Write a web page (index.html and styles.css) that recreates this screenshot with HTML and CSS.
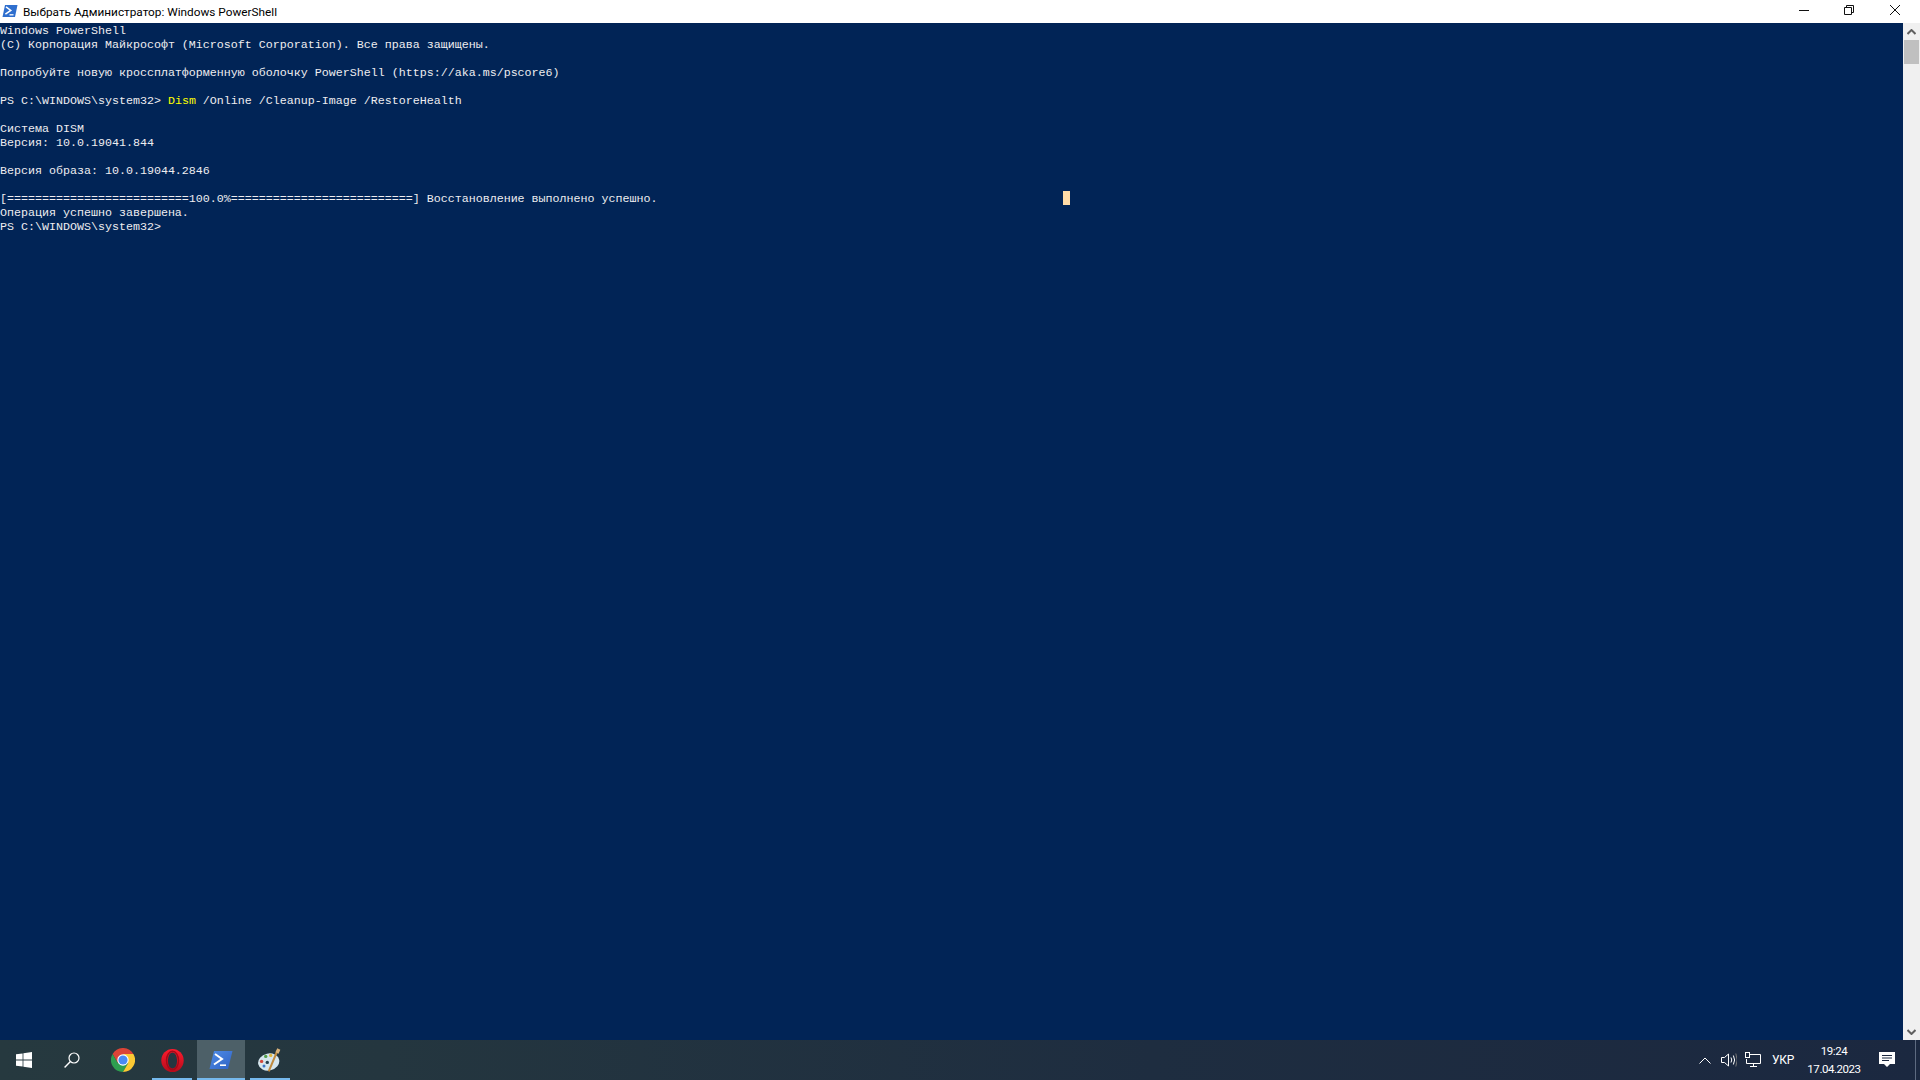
FILE: index.html
```html
<!DOCTYPE html>
<html lang="ru">
<head>
<meta charset="utf-8">
<title>Windows PowerShell</title>
<link rel="stylesheet" href="styles.css">
</head>
<body>
<div class="window">
  <header class="titlebar">
    <svg class="title-icon" viewBox="0 0 16 12" width="16" height="12"><path d="M3 0H15.5L13 12H0.5Z" fill="#2f6fce"/><path d="M4 1.8L8.8 5.4L3.4 9.2" fill="none" stroke="#fff" stroke-width="1.5"/><path d="M7.5 9.8H11.5" stroke="#fff" stroke-width="1.3"/></svg>
    <span class="title-text">Выбрать Администратор: Windows PowerShell</span>
    <div class="win-controls">
      <svg class="win-btn" viewBox="0 0 10 10" width="10" height="10"><path d="M0 5.5H10" stroke="#111" fill="none"/></svg>
      <svg class="win-btn" viewBox="0 0 10 10" width="10" height="10"><path d="M0.5 2.5H7.5V9.5H0.5ZM2.5 2.5V0.5H9.5V7.5H7.5" stroke="#111" fill="none"/></svg>
      <svg class="win-btn win-close" viewBox="0 0 10 10" width="10" height="10"><path d="M0 0L10 10M10 0L0 10" stroke="#111" fill="none"/></svg>
    </div>
  </header>
  <div class="console-area">
<pre class="console">Windows PowerShell
(C) Корпорация Майкрософт (Microsoft Corporation). Все права защищены.

Попробуйте новую кроссплатформенную оболочку PowerShell (https://aka.ms/pscore6)

PS C:\WINDOWS\system32&gt; <span class="cmd">Dism</span> /Online /Cleanup-Image /RestoreHealth

Система DISM
Версия: 10.0.19041.844

Версия образа: 10.0.19044.2846

[==========================100.0%==========================] Восстановление выполнено успешно.                                                          <span class="cursor"></span>
Операция успешно завершена.
PS C:\WINDOWS\system32&gt;</pre>
    <aside class="scrollbar">
      <div class="sb-btn"><svg viewBox="0 0 9 6" width="9" height="6"><path d="M0.5 5L4.5 1L8.5 5" fill="none" stroke="#606060" stroke-width="2"/></svg></div>
      <div class="sb-thumb"></div>
      <div class="sb-track"></div>
      <div class="sb-btn"><svg viewBox="0 0 9 6" width="9" height="6"><path d="M0.5 1L4.5 5L8.5 1" fill="none" stroke="#606060" stroke-width="2"/></svg></div>
    </aside>
  </div>
</div>
<footer class="taskbar">
  <div class="task-left">
    <div class="tb-item start"><svg viewBox="0 0 16 16" width="16" height="16"><path d="M0 2.3L6.6 1.4V7.6H0ZM7.4 1.3L16 0V7.6H7.4ZM0 8.4H6.6V14.6L0 13.7ZM7.4 8.4H16V16L7.4 14.7Z" fill="#fff"/></svg></div>
    <div class="tb-item search"><svg viewBox="0 0 16 16" width="16" height="16"><circle cx="10" cy="6" r="5" fill="none" stroke="#fff" stroke-width="1.2"/><path d="M6.4 9.6L0.6 15.4" stroke="#fff" stroke-width="1.4"/></svg></div>
    <div class="apps">
      <div class="tb-item app"><svg viewBox="0 0 24 24" width="24" height="24"><path d="M1.6 6A12 12 0 0 1 22.4 6H12L6.8 15Z" fill="#db4437"/><path d="M1.6 6L6.8 15H17.2L12 24A12 12 0 0 1 1.6 6Z" fill="#2e9e4f"/><path d="M22.4 6H12L17.2 15L12 24A12 12 0 0 0 22.4 6Z" fill="#fcc934"/><circle cx="12" cy="12" r="5.7" fill="#fff"/><circle cx="12" cy="12" r="4.6" fill="#4a8af4"/></svg></div>
      <div class="tb-item app running"><svg viewBox="0 0 23 23" width="23" height="23"><defs><linearGradient id="opg" x1="0" y1="0" x2="0" y2="1"><stop offset="0" stop-color="#ff1b2d"/><stop offset="1" stop-color="#b50c1c"/></linearGradient></defs><ellipse cx="11.5" cy="11.5" rx="11.2" ry="11.5" fill="url(#opg)"/><ellipse cx="11.5" cy="11.5" rx="4.6" ry="8" fill="#253640"/><ellipse cx="11.5" cy="11.5" rx="6" ry="9.2" fill="none" stroke="#a30a18" stroke-width="1.4"/></svg></div>
      <div class="tb-item app running active"><svg viewBox="0 0 24 18" width="24" height="18"><defs><linearGradient id="psg" x1="0" y1="0" x2="1" y2="1"><stop offset="0" stop-color="#4f8ce6"/><stop offset="1" stop-color="#2f62c4"/></linearGradient></defs><path d="M5 0H23.5L19 18H0.5Z" fill="url(#psg)"/><path d="M6 3L13 8L5 13.5" fill="none" stroke="#fff" stroke-width="2"/><path d="M11 14.2H17" stroke="#fff" stroke-width="1.6"/></svg></div>
      <div class="tb-item app running"><svg viewBox="0 0 24 24" width="24" height="24"><ellipse cx="10.7" cy="14" rx="10.7" ry="8.5" fill="#d6e6ee" transform="rotate(-12 10.7 14)"/><circle cx="3.6" cy="13.4" r="1.7" fill="#d2473c"/><circle cx="7.7" cy="8.4" r="1.7" fill="#53a04c"/><circle cx="12.7" cy="7.4" r="1.7" fill="#e0b53c"/><circle cx="9.3" cy="14.4" r="1.7" fill="#24404e"/><circle cx="6" cy="18" r="1.5" fill="#3d77c9"/><path d="M10.7 23.3L19.3 3" stroke="#c08a3e" stroke-width="2"/><path d="M19 5L20.8 1" stroke="#d8b27a" stroke-width="3.4"/></svg></div>
    </div>
  </div>
  <div class="tray">
    <svg class="tray-chev" viewBox="0 0 12 7" width="12" height="7"><path d="M0.5 6.5L6 1L11.5 6.5" fill="none" stroke="#fff"/></svg>
    <svg class="tray-vol" viewBox="0 0 16 16" width="16" height="16"><path d="M0.5 5.5H3.5L7.5 2V14L3.5 10.5H0.5Z" fill="none" stroke="#fff"/><path d="M10 5.5Q11.5 8 10 10.5" fill="none" stroke="#fff"/><path d="M12.4 3.5Q14.8 8 12.4 12.5" fill="none" stroke="#fff"/><path d="M14.8 1.5Q17.6 8 14.8 14.5" fill="none" stroke="#777"/></svg>
    <svg class="tray-net" viewBox="0 0 16 16" width="16" height="16"><path d="M4.5 2.5H15.5V11.5H1.5V7" fill="none" stroke="#fff"/><path d="M8.5 11.5V14.5M5 14.5H12" fill="none" stroke="#fff"/><rect x="0.5" y="0.5" width="4" height="5" fill="none" stroke="#fff"/></svg>
    <span class="tray-lang">УКР</span>
    <div class="clock"><span>19:24</span><span>17.04.2023</span></div>
    <svg class="tray-note" viewBox="0 0 16 16" width="16" height="16"><path d="M0 0H16V12H11L8 15L5 12H0Z" fill="#fff"/><path d="M3 3.5H13M3 6H13M3 8.5H10" stroke="#1b2840"/></svg>
    <div class="show-desktop"></div>
  </div>
</footer>
</body>
</html>
```
FILE: styles.css
```css
html, body {
  margin: 0;
  padding: 0;
  height: 100%;
  overflow: hidden;
}
body {
  display: flex;
  flex-direction: column;
  width: 1920px;
  height: 1080px;
  background: #012456;
}
.window {
  flex: 1;
  display: flex;
  flex-direction: column;
  min-height: 0;
}
.titlebar {
  height: 23px;
  background: #fff;
  display: flex;
  align-items: center;
  padding-left: 2px;
}
.title-icon { margin-right: 5px; margin-top: -2px; }
.title-text {
  font: 11.8px/23px Roboto, sans-serif;
  color: #000;
  white-space: nowrap;
  padding-top: 1px;
}
.win-controls {
  margin-left: auto;
  display: flex;
  gap: 35px;
  padding-right: 20px;
}
.win-btn { display: block; margin-top: -3px; }
.win-close { margin-left: 1px; }
.console-area {
  flex: 1;
  display: flex;
  min-height: 0;
}
.console {
  flex: 1;
  margin: 0;
  padding-top: 1px;
  font: 11.667px/14px "Liberation Mono", monospace;
  color: #eeedf0;
  background: #012456;
  white-space: pre;
  overflow: hidden;
}
.cmd { color: #ffff00; }
.cursor {
  display: inline-block;
  width: 7px;
  height: 14px;
  vertical-align: top;
  position: relative;
  top: -1px;
  background: #ffdca8;
}
.scrollbar {
  width: 17px;
  background: #f0f0f0;
  display: flex;
  flex-direction: column;
  align-items: center;
}
.sb-btn {
  height: 17px;
  width: 17px;
  display: flex;
  align-items: center;
  justify-content: center;
  flex: none;
}
.sb-thumb {
  width: 15px;
  height: 24px;
  background: #c0c0c0;
  flex: none;
}
.sb-track { flex: 1; }
.taskbar {
  height: 40px;
  flex: none;
  display: flex;
  justify-content: space-between;
  background: linear-gradient(90deg, #26393f 0%, #24363f 20%, #1e2d40 60%, #1b2840 100%);
  color: #fff;
}
.task-left {
  display: flex;
}
.apps {
  display: flex;
  gap: 1px;
  margin-left: 3px;
}
.tb-item {
  height: 40px;
  display: flex;
  align-items: center;
  justify-content: center;
  position: relative;
  box-sizing: border-box;
}
.start { width: 48px; }
.search { width: 48px; }
.app { width: 48px; }
.app.running::after {
  content: "";
  position: absolute;
  left: 4px;
  right: 4px;
  bottom: 0;
  height: 2px;
  background: #76b9ed;
}
.app.active { background: #4d6068; }
.app.active::after { left: 0; right: 0; }
.tray {
  display: flex;
  align-items: center;
}
.tray-chev { margin-right: 10px; }
.tray-vol { margin-right: 8px; }
.tray-net { margin-right: 11px; }
.tray-lang {
  font: 12px/16px Roboto, sans-serif;
  color: #fff;
  width: 21px;
  margin-right: 12px;
  white-space: nowrap;
  letter-spacing: -0.3px;
}
.clock {
  display: flex;
  flex-direction: column;
  align-items: center;
  font: 11.5px/18px Roboto, sans-serif;
  letter-spacing: -0.45px;
  color: #fff;
  margin-right: 16px;
  width: 58px;
}
.tray-note { margin-right: 20px; }
.show-desktop {
  width: 5px;
  height: 40px;
  box-sizing: border-box;
  border-left: 1px solid #5d6a80;
}
```
